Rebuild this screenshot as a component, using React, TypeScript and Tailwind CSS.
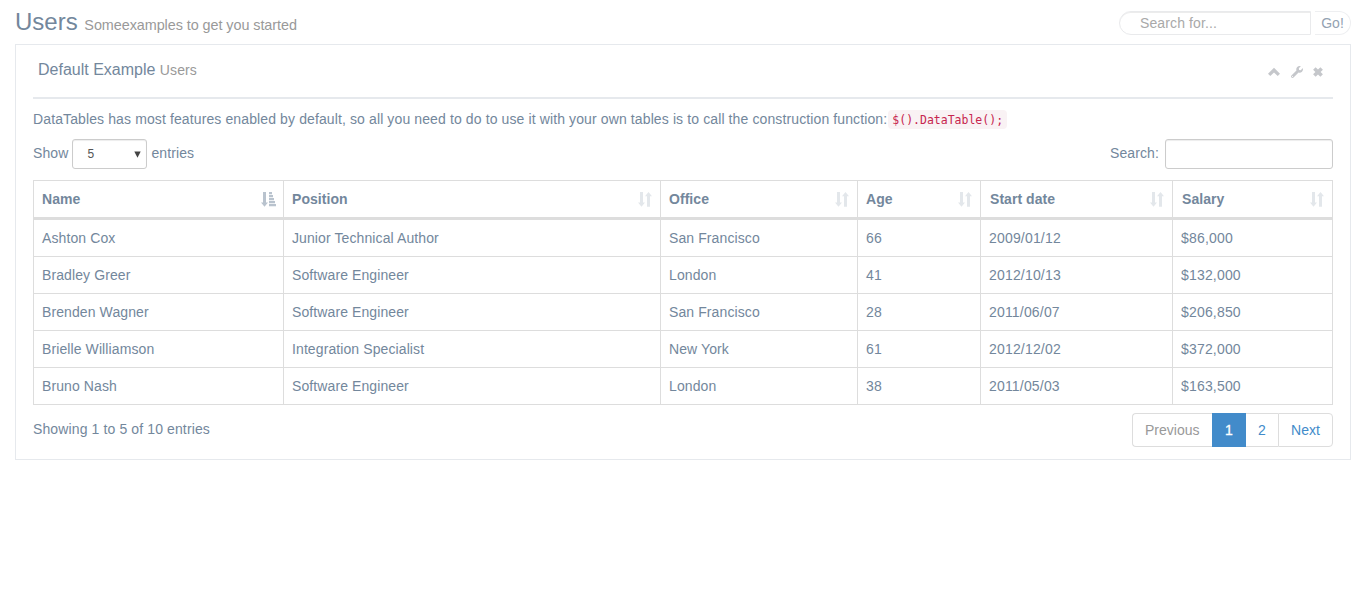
import React from "react";
import { FaWrench } from "react-icons/fa";

const columns = [
  { name: "Name", width: "w-[250px]", pad: "pl-2 pr-[7px]" },
  { name: "Position", width: "w-[377px]", pad: "pl-2 pr-2" },
  { name: "Office", width: "w-[197px]", pad: "pl-2 pr-2" },
  { name: "Age", width: "w-[123px]", pad: "pl-2 pr-2" },
  { name: "Start date", width: "w-[192px]", pad: "pl-[9px] pr-2" },
  { name: "Salary", width: "w-[160px]", pad: "pl-[9px] pr-2" },
];

const rows = [
  ["Ashton Cox", "Junior Technical Author", "San Francisco", "66", "2009/01/12", "$86,000"],
  ["Bradley Greer", "Software Engineer", "London", "41", "2012/10/13", "$132,000"],
  ["Brenden Wagner", "Software Engineer", "San Francisco", "28", "2011/06/07", "$206,850"],
  ["Brielle Williamson", "Integration Specialist", "New York", "61", "2012/12/02", "$372,000"],
  ["Bruno Nash", "Software Engineer", "London", "38", "2011/05/03", "$163,500"],
];

function SortIcon() {
  return (
    <svg width="14" height="15" viewBox="0 0 14 15" fill="#e3e7eb" className="shrink-0">
      <path d="M2 0h3v10.5h2L3.5 14.7 0 10.5h2zM9 14.7h3V4.2h2L10.5 0 7 4.2h2z" />
    </svg>
  );
}

function SortAscIcon() {
  return (
    <svg width="15" height="15" viewBox="0 0 15 15" fill="#b9c3ce" className="shrink-0">
      <path d="M2 0h3v10.5h2L3.5 14.7 0 10.5h2zM8 0h3v2.3H8zM8 3h4v2.3H8zM8 6h5v2.3H8zM8 9h6v2.3H8zM8 12h7v2.3H8z" />
    </svg>
  );
}

function ChevronIcon() {
  return (
    <svg width="14" height="10" viewBox="0 0 14 10" fill="#c5c7cb">
      <path d="M7 .8l6 5.9-2.3 2.3L7 5.4 3.3 9 1 6.7z" />
    </svg>
  );
}

function CloseIcon() {
  return (
    <svg width="10" height="10" viewBox="0 0 10 10" fill="#c5c7cb">
      <path d="M2.6.2 5 2.5 7.4.2 9.9 2.7 7.6 5l2.3 2.3-2.5 2.5L5 7.5 2.6 9.8.1 7.3 2.4 5 .1 2.7z" />
    </svg>
  );
}

export default function App() {
  return (
    <div className="h-[613px] bg-white px-[15px] text-[14px] leading-5 text-[#73879c] [font-family:'Liberation_Sans',Arial,sans-serif]">
      <header className="flex h-[44px] items-start justify-between">
        <h3 className="pt-[9px] text-[24px] leading-[26px]">
          Users <small className="text-[14.4px] tracking-[-0.06px] text-[#999]">Someexamples to get you started</small>
        </h3>
        <div className="flex gap-1 pt-[11px]">
          <input
            placeholder="Search for..."
            className="h-6 w-[192px] rounded-l-full border border-[#e9eaec] pl-5 text-[14px] tracking-[0.12px] shadow-[inset_0_1px_0_rgba(0,0,0,0.075)] outline-none placeholder:text-[#a9a9a9]"
          />
          <button className="h-6 w-9 rounded-r-full border border-l-0 border-[#eeeff1] text-[14px] text-[#93a2b2]">
            Go!
          </button>
        </div>
      </header>

      <section className="h-[416px] border border-[#e6e9ed] px-[17px]">
        <div className="flex h-[54px] justify-between border-b-2 border-[#e6e9ed] pl-[5px] pr-[10px]">
          <h2 className="pt-[15px] text-[16px]">
            Default Example <small className="text-[14px] tracking-[0.1px] text-[#999]">Users</small>
          </h2>
          <div className="flex h-[54px] items-center text-[#c5c7cb]">
            <ChevronIcon />
            <FaWrench size={12} className="ml-[10px] mr-[10px]" />
            <CloseIcon />
          </div>
        </div>

        <p className="flex h-[40px] pt-[10px] tracking-[0.116px]">
          DataTables has most features enabled by default, so all you need to do to use it with your own tables is to call the construction function:
          <code className="ml-px mt-px h-[19px] rounded-[4px] bg-[#f9f2f4] px-1 text-[11.5px] leading-[21px] tracking-normal text-[#c7254e] [font-family:'DejaVu_Sans_Mono',monospace]">
            $().DataTable();
          </code>
        </p>

        <div className="flex h-[41px] justify-between tracking-[0.1px]">
          <label className="flex h-[30px] items-center">
            <span className="mb-[2px]">Show</span>
            <span className="mx-1 flex h-[30px] w-[75px] items-center justify-between rounded-[3px] border border-[#ccc] pl-[14px] pr-[5px] text-[12px] text-[#555] shadow-[inset_0_1px_1px_rgba(0,0,0,0.075)]">
              5
              <svg width="7" height="7" viewBox="0 0 7 7" fill="#444">
                <path d="M.3.5h6.4L3.5 6.7z" />
              </svg>
            </span>
            <span className="mb-[2px]">entries</span>
          </label>
          <label className="flex h-[30px] items-center">
            <span className="mb-[2px]">Search:</span>
            <input className="ml-[6px] h-[30px] w-[168px] rounded-[3px] border border-[#ccc] px-2 shadow-[inset_0_1px_1px_rgba(0,0,0,0.075)] outline-none" />
          </label>
        </div>

        <table className="w-[1300px] table-fixed border-separate border-spacing-0 border-r border-[#ddd] tracking-[0.1px]">
          <thead>
            <tr>
              {columns.map((c, i) => (
                <th key={c.name} className={`${c.width} ${c.pad} h-10 border-b-[3px] border-l border-t border-[#ddd] text-left tracking-[0.05px]`}>
                  <div className="flex items-center justify-between">
                    {c.name}
                    {i === 0 ? <SortAscIcon /> : <SortIcon />}
                  </div>
                </th>
              ))}
            </tr>
          </thead>
          <tbody>
            {rows.map((r) => (
              <tr key={r[0]}>
                {r.map((v, i) => (
                  <td key={i} className={`h-[37px] border-b border-l border-[#ddd] px-2 ${i > 2 ? "tracking-[0.18px]" : ""}`}>
                    {v}
                  </td>
                ))}
              </tr>
            ))}
          </tbody>
        </table>

        <div className="flex justify-between pt-2">
          <div className="pt-[6px] tracking-[0.12px]">Showing 1 to 5 of 10 entries</div>
          <nav className="flex h-[34px] text-[#428bca]">
            <a className="w-[80px] rounded-l-[4px] border border-r-0 border-[#ddd] pl-3 pt-[6px] text-[#999]">Previous</a>
            <a className="w-[34px] bg-[#428bca] pt-[7px] text-center text-white [-webkit-text-stroke:0.3px_white]">1</a>
            <a className="w-[32px] border-y border-[#ddd] pt-[6px] text-center">2</a>
            <a className="w-[55px] rounded-r-[4px] border border-[#ddd] pt-[6px] text-center">Next</a>
          </nav>
        </div>
      </section>
    </div>
  );
}
